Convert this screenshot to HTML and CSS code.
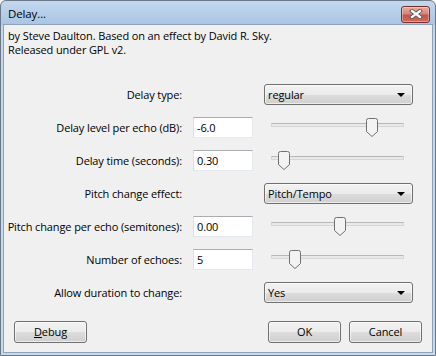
FILE: index.html
```html
<!DOCTYPE html>
<html>
<head>
<meta charset="utf-8">
<link rel="stylesheet" href="styles.css">
</head>
<body>
<div class="window">
  <div class="titlebar">
    <span class="title">Delay...</span>
    <div class="close">
      <svg width="14" height="10" viewBox="0 0 14 10">
        <path d="M3 2 L11 8 M11 2 L3 8" stroke="#5b5b5b" stroke-width="4" stroke-linecap="square"/>
        <path d="M3 2 L11 8 M11 2 L3 8" stroke="#ffffff" stroke-width="2.2" stroke-linecap="square"/>
      </svg>
    </div>
  </div>
  <div class="content">
    <div class="desc">
      <div>by Steve Daulton. Based on an effect by David R. Sky.</div>
      <div>Released under GPL v2.</div>
    </div>
    <div class="grid">
      <div class="label">Delay type:</div>
      <div></div>
      <div class="choice"><span>regular</span><i class="arrow"></i></div>

      <div class="label">Delay level per echo (dB):</div>
      <div class="textbox">-6.0</div>
      <div class="slider"><div class="track"></div><div class="thumb" style="left:102px"><svg width="12" height="19" viewBox="0 0 12 19"><path d="M0.5 2.5 Q0.5 0.5 2.5 0.5 L9.5 0.5 Q11.5 0.5 11.5 2.5 L11.5 13.5 L6 18.5 L0.5 13.5 Z" fill="#f3f3f3" stroke="#707070"/></svg></div></div>

      <div class="label">Delay time (seconds):</div>
      <div class="textbox">0.30</div>
      <div class="slider"><div class="track"></div><div class="thumb" style="left:14px"><svg width="12" height="19" viewBox="0 0 12 19"><path d="M0.5 2.5 Q0.5 0.5 2.5 0.5 L9.5 0.5 Q11.5 0.5 11.5 2.5 L11.5 13.5 L6 18.5 L0.5 13.5 Z" fill="#f3f3f3" stroke="#707070"/></svg></div></div>

      <div class="label">Pitch change effect:</div>
      <div></div>
      <div class="choice"><span>Pitch/Tempo</span><i class="arrow"></i></div>

      <div class="label">Pitch change per echo (semitones):</div>
      <div class="textbox">0.00</div>
      <div class="slider"><div class="track"></div><div class="thumb" style="left:70px"><svg width="12" height="19" viewBox="0 0 12 19"><path d="M0.5 2.5 Q0.5 0.5 2.5 0.5 L9.5 0.5 Q11.5 0.5 11.5 2.5 L11.5 13.5 L6 18.5 L0.5 13.5 Z" fill="#f3f3f3" stroke="#707070"/></svg></div></div>

      <div class="label">Number of echoes:</div>
      <div class="textbox">5</div>
      <div class="slider"><div class="track"></div><div class="thumb" style="left:25px"><svg width="12" height="19" viewBox="0 0 12 19"><path d="M0.5 2.5 Q0.5 0.5 2.5 0.5 L9.5 0.5 Q11.5 0.5 11.5 2.5 L11.5 13.5 L6 18.5 L0.5 13.5 Z" fill="#f3f3f3" stroke="#707070"/></svg></div></div>

      <div class="label">Allow duration to change:</div>
      <div></div>
      <div class="choice"><span>Yes</span><i class="arrow"></i></div>
    </div>
    <div class="buttons">
      <div class="btn"><u>D</u>ebug</div>
      <div class="spacer"></div>
      <div class="btn">OK</div>
      <div class="btn">Cancel</div>
    </div>
  </div>
</div>
</body>
</html>
```

FILE: styles.css
```css
html, body {
  margin: 0;
  padding: 0;
  background: #ffffff;
}
body {
  font-family: "Open Sans", "Noto Sans", "DejaVu Sans", sans-serif;
  font-size: 11px;
  letter-spacing: -0.12px;
  color: #000;
}
.window {
  width: 436px;
  height: 356px;
  box-sizing: border-box;
  border: 1px solid #6b7887;
  border-radius: 6px 6px 0 0;
  background: linear-gradient(to bottom, #c3d8ee 0px, #a9c4e2 24px, #c2d6ec 24px, #c6daef 100%);
  display: flex;
  flex-direction: column;
}
.titlebar {
  height: 23px;
  display: flex;
  align-items: center;
  justify-content: space-between;
  padding: 0 5px 0 7px;
}
.title {
  font-size: 11.5px;
  color: #000;
  margin-top: 2px;
}
.close {
  width: 27px;
  height: 15px;
  margin-top: 3px;
  border: 1px solid #7a2f28;
  border-radius: 3px;
  background: linear-gradient(to bottom, #e7aaa0 0%, #d8857a 45%, #c55446 55%, #cf6b5b 100%);
  box-shadow: inset 0 0 0 1px rgba(255,255,255,0.35);
  display: flex;
  align-items: center;
  justify-content: center;
}
.content {
  flex: 1;
  margin: 0 2px 2px 2px;
  border: 1px solid #8ea2b8;
  background: #f0f0f0;
  display: flex;
  flex-direction: column;
}
.desc {
  padding: 4px 0 0 4px;
  line-height: 14px;
  height: 59px;
  box-sizing: border-box;
}
.grid {
  display: grid;
  grid-template-columns: 178px 60px 149px;
  grid-auto-rows: 21px;
  column-gap: 11px;
  row-gap: 12px;
}
.label {
  text-align: right;
  line-height: 21px;
  white-space: nowrap;
}
.textbox {
  box-sizing: border-box;
  height: 21px;
  background: #fff;
  border: 1px solid #e3e9ef;
  border-top-color: #abadb3;
  border-left-color: #dbdfe6;
  padding-left: 3px;
  line-height: 19px;
}
.choice {
  box-sizing: border-box;
  height: 21px;
  border: 1px solid #707070;
  border-radius: 3px;
  background: linear-gradient(to bottom, #f2f2f2 0%, #ebebeb 50%, #dddddd 50%, #cfcfcf 100%);
  box-shadow: inset 0 0 0 1px rgba(255,255,255,0.6);
  display: flex;
  align-items: center;
  justify-content: space-between;
  padding: 0 7px 0 3px;
  line-height: 19px;
}
.arrow {
  width: 0;
  height: 0;
  border-left: 4px solid transparent;
  border-right: 4px solid transparent;
  border-top: 4px solid #000;
  margin-top: 1px;
}
.slider {
  position: relative;
  height: 21px;
}
.track {
  position: absolute;
  left: 7px;
  right: 9px;
  top: 6px;
  height: 2px;
  border: 1px solid #d6d6d6;
  border-top-color: #b8b8b8;
  background: #e7eaea;
}
.thumb {
  position: absolute;
  top: 1px;
  width: 12px;
  height: 19px;
}
.thumb svg {
  display: block;
}
.buttons {
  display: flex;
  padding: 18px 10px 0 10px;
  gap: 8px;
}
.spacer {
  flex: 1;
}
.btn {
  box-sizing: border-box;
  width: 73px;
  height: 22px;
  border: 1px solid #707070;
  border-radius: 3px;
  background: linear-gradient(to bottom, #f2f2f2 0%, #ebebeb 50%, #dddddd 50%, #cfcfcf 100%);
  box-shadow: inset 0 0 0 1px rgba(255,255,255,0.6);
  text-align: center;
  line-height: 20px;
}
```
